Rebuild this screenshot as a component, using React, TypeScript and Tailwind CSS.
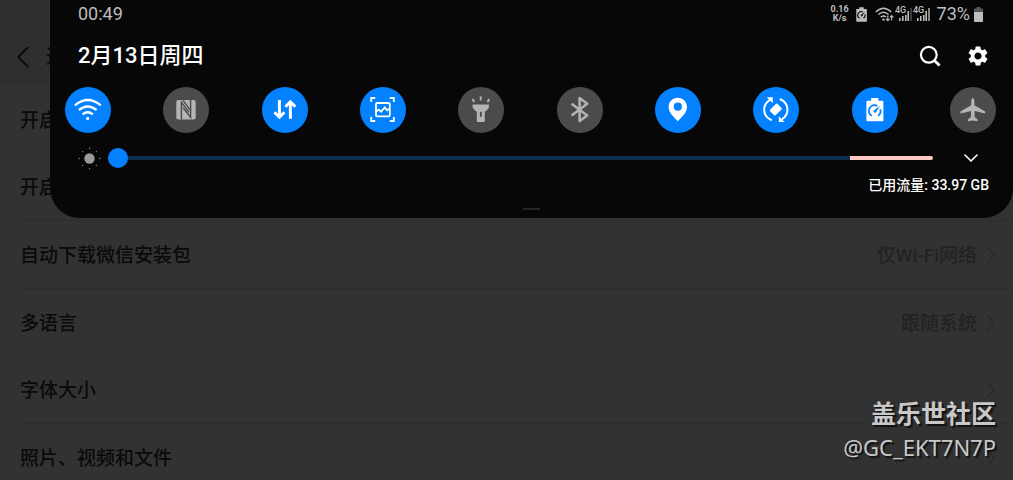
import React from 'react';
import { ChevronDown, ChevronLeft, ChevronRight } from 'lucide-react';
import { MdSettings } from 'react-icons/md';

const rows = [
  { label: '开启新消息通知', value: '', border: false },
  { label: '开启聊天通知', value: '', border: true },
  { label: '自动下载微信安装包', value: '仅Wi-Fi网络', border: true },
  { label: '多语言', value: '跟随系统', border: false },
  { label: '字体大小', value: '', border: true },
  { label: '照片、视频和文件', value: '', border: false },
];

const WifiIcon = () => (
  <g fill="none" stroke="currentColor" strokeWidth="2.3">
    <path d="M9.8 18.4Q22.7 7.6 35.8 18.4" />
    <path d="M13.9 23Q22.7 16 31.6 23" />
    <path d="M17.6 27.4Q22.7 23.2 27.9 27.4" />
    <circle cx="22.7" cy="31.4" r="1.6" fill="currentColor" stroke="none" />
  </g>
);

const NfcIcon = () => (
  <g>
    <rect x="13.3" y="13" width="19.4" height="19.4" rx="2" fill="currentColor" />
    <path
      d="M18.4 32.6V15.4L26 25.4M20 13.4L27.6 23.6M27.6 12.8V30.4L20 20.6"
      fill="none"
      stroke="#4b4b4b"
      strokeWidth="1.4"
    />
  </g>
);

const DataIcon = () => (
  <g fill="none" stroke="currentColor" strokeWidth="3">
    <path d="M17.4 13V30M12.4 25.2L17.4 30.2L22.4 25.2" />
    <path d="M28.4 31.8V15M23.4 19.8L28.4 14.8L33.4 19.8" />
  </g>
);

const CaptureIcon = () => (
  <g fill="none" stroke="currentColor" strokeWidth="1.8">
    <path d="M11.2 15V11H15.2M29.8 11H33.8V15M33.8 30V34H29.8M15.2 34H11.2V30" />
    <rect x="16" y="16" width="13.8" height="13.4" rx="1.2" />
    <path d="M16 24.8L18.8 22.6L21 24.8L24.8 20.4L27 23.2L29.6 21.4" />
  </g>
);

const TorchIcon = () => (
  <g fill="currentColor">
    <path
      d="M14.4 12.2L16.4 14.8M22.7 9.4V13.6M31.4 12.2L29.4 14.8"
      stroke="currentColor"
      strokeWidth="1.9"
    />
    <path d="M14.6 17.6H30.9V20Q30.6 22 26.8 24.8V34Q26.8 35 25.8 35H19.8Q18.8 35 18.8 34V24.8Q15 22 14.6 20Z" />
    <path d="M21.9 24.8H23.8V29.8H21.9Z" fill="#4b4b4b" />
  </g>
);

const BluetoothIcon = () => (
  <path
    d="M14.6 16.8L30.2 28.4L22.6 34V11L30.2 16.8L14.6 28.4"
    fill="none"
    stroke="currentColor"
    strokeWidth="2.5"
    strokeLinejoin="round"
  />
);

const PinIcon = () => (
  <path
    d="M22.8 10.8C17.6 10.8 13.6 14.8 13.6 19.8C13.6 25.6 18.4 29.6 22.8 34.2C27.2 29.6 32 25.6 32 19.8C32 14.8 28 10.8 22.8 10.8ZM22.8 15.6A4.1 4.1 0 1 1 22.8 23.8A4.1 4.1 0 1 1 22.8 15.6Z"
    fill="currentColor"
  />
);

const RotateIcon = () => (
  <g fill="none" stroke="currentColor" strokeWidth="2">
    <path d="M18.8 33.2C9.4 29.4 8.6 18.2 16.8 12.8M26.8 12C36.2 15.8 37 27 28.8 32.4" />
    <path d="M13.8 10.2H19.8V16.2ZM31.6 35H25.8V29.2Z" fill="currentColor" stroke="none" />
    <rect x="18.9" y="17.4" width="7.8" height="10.4" rx="1" transform="rotate(45 22.8 22.6)" fill="currentColor" stroke="none" />
  </g>
);

// the gauge is cut out in the colour of whatever is behind the battery
const SaverIcon = ({ cut }: { cut: string }) => (
  <g>
    <path
      d="M19.2 11H26.4V13.8H30.4Q31.4 13.8 31.4 14.8V33.2Q31.4 34.2 30.4 34.2H15.4Q14.4 34.2 14.4 33.2V14.8Q14.4 13.8 15.4 13.8H19.2Z"
      fill="currentColor"
    />
    <path d="M19.8 28.8A5.5 5.5 0 0 1 25.2 18.9M28.2 22.4A5.5 5.5 0 0 1 26 28.8" fill="none" stroke={cut} strokeWidth="1.8" />
    <path d="M28 18.8L24 25.2A1.3 1.3 0 0 1 21.8 23.6Z" fill={cut} />
  </g>
);

const PlaneIcon = () => (
  <path
    d="M22.8 10.8Q24.4 11.4 24.4 14.4V18.2L35.2 24.4V26.4L24.6 24V29.8L27.6 32.6V34.2L22.8 33.4L18 34.2V32.6L21 29.8V24L10.4 26.4V24.4L21.2 18.2V14.4Q21.2 11.4 22.8 10.8Z"
    fill="currentColor"
  />
);

const tiles = [
  { name: 'Wi-Fi', on: true, icon: <WifiIcon /> },
  { name: 'NFC', on: false, icon: <NfcIcon /> },
  { name: '移动数据', on: true, icon: <DataIcon /> },
  { name: '智能截屏', on: true, icon: <CaptureIcon /> },
  { name: '手电筒', on: false, icon: <TorchIcon /> },
  { name: '蓝牙', on: false, icon: <BluetoothIcon /> },
  { name: '位置', on: true, icon: <PinIcon /> },
  { name: '自动旋转', on: true, icon: <RotateIcon /> },
  { name: '省电模式', on: true, icon: <SaverIcon cut="#0381fe" /> },
  { name: '飞行模式', on: false, icon: <PlaneIcon /> },
];

const Signal = ({ weak = false }: { weak?: boolean }) => (
  <svg width="18" height="16" viewBox="0 0 18 16">
    <text x="0" y="7" fontSize="9" fontWeight="500" fill="currentColor">4G</text>
    <path d="M4.8 12V15M7.8 10V15M10.8 9V15M13.2 5V15" stroke="currentColor" strokeWidth="1.6" />
    <path d="M16 2V15" stroke={weak ? '#555' : 'currentColor'} strokeWidth="1.4" />
  </svg>
);

const StatusBar = () => (
  <div className="flex h-7 items-center justify-between pr-[30px] pl-7 text-[#bdbdbd]">
    <span className="text-lg leading-7">00:49</span>
    <div className="flex items-center">
      <div className="mr-[7px] text-center text-[9px] leading-[9px] font-bold">
        <p>0.16</p>
        <p>K/s</p>
      </div>
      <svg className="mr-2" width="11" height="15" viewBox="14 11 17.6 23.4">
        <SaverIcon cut="#070707" />
      </svg>
      <svg className="mr-px" width="19" height="15" viewBox="0 0 19 15" fill="none" stroke="currentColor" strokeWidth="1.4">
        <path d="M.8 5Q8.5-2.6 16.2 5M3.4 7.6Q8.5 2.8 13.6 7.6M5.8 10.2Q8.5 7.8 11 10" />
        <circle cx="8.5" cy="12.6" r="1.2" fill="currentColor" stroke="none" />
        <path d="M12.8 8.6V13.4M11 11.8L12.8 13.6L14.6 11.8M16.6 13.6V8.8M14.9 10.4L16.6 8.6L18.4 10.4" strokeWidth="1.1" />
      </svg>
      <Signal weak />
      <Signal />
      <span className="mr-1 ml-1.5 text-lg leading-7">73%</span>
      <svg width="9" height="15" viewBox="0 0 9 15">
        <path d="M2.5 0H6.5V1.5H9V5H0V1.5H2.5Z" fill="#555" />
        <path d="M0 5H9V14Q9 15 8 15H1Q0 15 0 14Z" fill="currentColor" />
      </svg>
    </div>
  </div>
);

const QuickPanel = () => (
  <section className="absolute top-0 right-0 left-[50px] rounded-b-[30px] bg-[#070707] pb-2 text-white">
    <StatusBar />
    <div className="flex h-[55px] items-center justify-between pr-[23px] pl-7">
      <h1 className="text-[22px] leading-7 font-medium">2月13日周四</h1>
      <div className="flex items-center gap-6">
        <button aria-label="搜索">
          <svg width="24" height="24" viewBox="0 0 24 24" fill="none" stroke="currentColor">
            <circle cx="10.8" cy="10.8" r="7.9" strokeWidth="2.2" />
            <path d="M16.4 16.4L21.6 21.6" strokeWidth="2.8" />
          </svg>
        </button>
        <button aria-label="设置">
          <MdSettings size={24} />
        </button>
      </div>
    </div>
    <div className="flex justify-between pt-1 pr-[17px] pl-[15px]">
      {tiles.map((tile) => (
        <button
          key={tile.name}
          aria-label={tile.name}
          aria-pressed={tile.on}
          className={tile.on ? 'rounded-full bg-[#0381fe] text-white' : 'rounded-full bg-[#4b4b4b] text-[#b4b4b4]'}
        >
          <svg width="46" height="46" viewBox="0 0 46 46">{tile.icon}</svg>
        </button>
      ))}
    </div>
    <div className="flex h-[50px] items-center pr-[30px] pl-7">
      <svg className="mr-[7px] shrink-0" width="23" height="23" viewBox="0 0 23 23">
        <circle cx="11.5" cy="11.5" r="5.2" fill="#9a9a9a" />
        <path
          d="M11.5 1.2V1.2M11.5 21.8V21.8M1.2 11.5V11.5M21.8 11.5V11.5M4.6 4.6V4.6M18.4 4.6V4.6M4.6 18.4V18.4M18.4 18.4V18.4"
          stroke="#8a8a8a"
          strokeWidth="1.4"
          strokeLinecap="round"
        />
      </svg>
      <input
        type="range"
        aria-label="亮度"
        min="0"
        max="100"
        defaultValue="0"
        className="h-1 min-w-0 flex-1 appearance-none rounded-full bg-linear-to-r from-[#0b2d4f] from-90% to-[#fbc8c2] to-90% [&::-webkit-slider-thumb]:size-5 [&::-webkit-slider-thumb]:appearance-none [&::-webkit-slider-thumb]:rounded-full [&::-webkit-slider-thumb]:bg-[#0381fe]"
      />
      <button aria-label="展开" className="ml-[26px]">
        <ChevronDown size={24} strokeWidth={1.6} />
      </button>
    </div>
    <p className="-mt-2 pr-6 text-right text-sm leading-5 font-medium">已用流量: 33.97 GB</p>
    <div className="mx-auto mt-[13px] h-0.5 w-[17px] bg-[#242424]" />
  </section>
);

const App = () => {
  return (
    <div className="relative h-screen overflow-hidden bg-[#323232] font-[Roboto,'Noto_Sans_CJK_SC',sans-serif] text-[#0a0a0a]">
      <header className="flex h-[86px] items-center bg-[#2f2f2f] pt-7 pl-1">
        <button aria-label="返回">
          <ChevronLeft size={38} strokeWidth={1.2} />
        </button>
        <h2 className="ml-1 text-xl font-medium">通用</h2>
      </header>
      <ul className="pl-5">
        {rows.map((row) => (
          <li key={row.label} className={row.border ? 'border-b border-[#2c2c2c]' : ''}>
            <a href="#" className="flex h-[67px] items-center pr-2 text-[19px] font-medium">
              <span className="pt-1">{row.label}</span>
              <span className="ml-auto pt-1 text-[#222]">{row.value}</span>
              <ChevronRight className="text-[#2a2a2a]" size={28} strokeWidth={1.2} />
            </a>
          </li>
        ))}
      </ul>
      <QuickPanel />
      <div className="absolute right-[17px] bottom-[17px] text-right text-[#c8c8c8] [text-shadow:2px_2px_1px_#111]">
        <p className="text-[25px] leading-8 font-bold">盖乐世社区</p>
        <p className="font-['Noto_Sans',sans-serif] text-[22px] leading-8">@GC_EKT7N7P</p>
      </div>
    </div>
  );
};

export default App;
